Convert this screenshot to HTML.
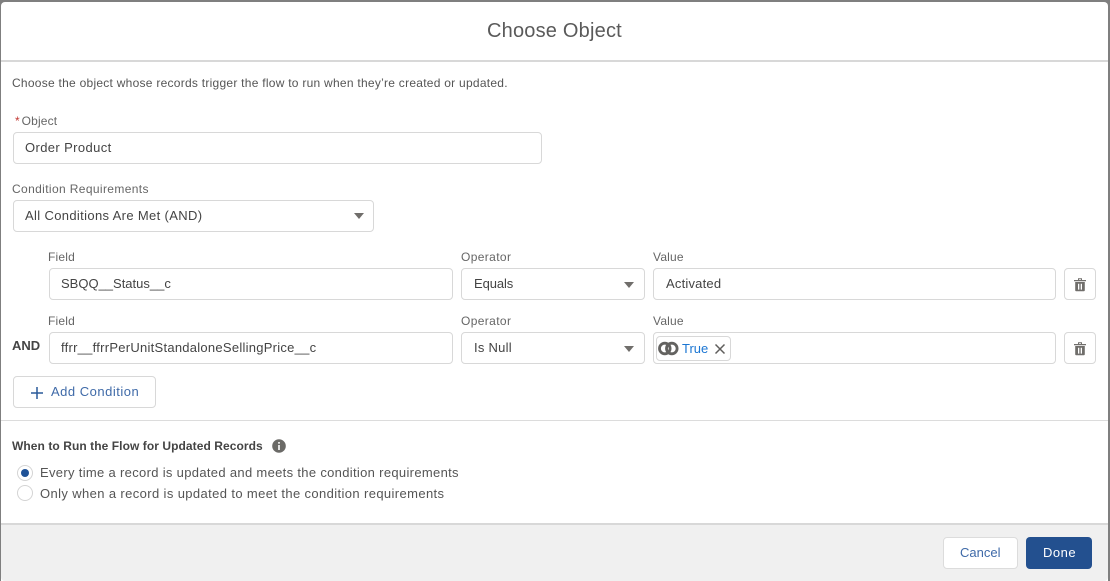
<!DOCTYPE html>
<html><head><meta charset="utf-8"><style>
html,body{margin:0;padding:0;width:1110px;height:581px;overflow:hidden;background:#7f7f7f}
*{box-sizing:border-box}
body{font-family:"Liberation Sans",sans-serif;font-size:13px;color:#444}
#m{position:absolute;left:1px;top:2px;width:1107px;height:579px;background:#fff;border-radius:4px 4px 0 0;overflow:hidden}
.a{position:absolute}
.t{position:absolute;white-space:nowrap;line-height:16px}
.l{color:#666;font-size:12px}
.b{position:absolute;background:#fff;border:1px solid #d8d8d8;border-radius:4px}
.tri{position:absolute;width:0;height:0;border-left:5.5px solid transparent;border-right:5.5px solid transparent;border-top:6.5px solid #706e6b}
</style></head><body>
<div id="m"></div>
<div class="a" style="left:1px;top:60px;width:1107px;height:2px;background:#d8d8d8"></div>
<div class="t" style="left:487px;top:19px;font-size:20px;line-height:24px;color:#5a5a5a;letter-spacing:.2px">Choose Object</div>
<div class="t" style="left:12px;top:75px;font-size:12px;letter-spacing:.26px;color:#555">Choose the object whose records trigger the flow to run when they’re created or updated.</div>

<div class="t l" style="left:15px;top:113px"><span style="color:#c23934">*</span><span style="margin-left:2px;letter-spacing:.15px">Object</span></div>
<div class="b" style="left:13px;top:132px;width:529px;height:32px"></div>
<div class="t" style="left:25px;top:140px;letter-spacing:.38px">Order Product</div>

<div class="t l" style="left:12px;top:181px;letter-spacing:.37px">Condition Requirements</div>
<div class="b" style="left:13px;top:200px;width:361px;height:32px"></div>
<div class="t" style="left:25px;top:208px;letter-spacing:.35px">All Conditions Are Met (AND)</div>
<div class="tri" style="left:354px;top:213px"></div>

<div class="t l" style="left:48px;top:249px;letter-spacing:.2px">Field</div>
<div class="t l" style="left:461px;top:249px;letter-spacing:.37px">Operator</div>
<div class="t l" style="left:653px;top:249px;letter-spacing:.2px">Value</div>
<div class="b" style="left:49px;top:268px;width:404px;height:32px"></div>
<div class="t" style="left:61px;top:276px">SBQQ__Status__c</div>
<div class="b" style="left:461px;top:268px;width:184px;height:32px"></div>
<div class="t" style="left:474px;top:276px;letter-spacing:-.1px">Equals</div>
<div class="tri" style="left:624px;top:282px"></div>
<div class="b" style="left:653px;top:268px;width:403px;height:32px"></div>
<div class="t" style="left:666px;top:276px;letter-spacing:.2px">Activated</div>
<div class="b" style="left:1064px;top:268px;width:32px;height:32px"></div>
<svg class="a" style="left:1073px;top:277px" width="14" height="15" viewBox="0 0 14 15"><path d="M1 3h12v1.200H1zM5 3V1.300h4V3h-1V2.300H6V3z" fill="#706e6b"/><path d="M2.200 5h9.600v8.300a1 1 0 0 1-1 1H3.200a1 1 0 0 1-1-1z" fill="#706e6b"/><path d="M5 6.800h1.300v5.800H5zM7.700 6.800H9v5.800H7.700z" fill="#fff"/></svg>

<div class="t" style="left:12px;top:338px;font-weight:bold">AND</div>
<div class="t l" style="left:48px;top:313px;letter-spacing:.2px">Field</div>
<div class="t l" style="left:461px;top:313px;letter-spacing:.37px">Operator</div>
<div class="t l" style="left:653px;top:313px;letter-spacing:.2px">Value</div>
<div class="b" style="left:49px;top:332px;width:404px;height:32px"></div>
<div class="t" style="left:61px;top:340px;letter-spacing:.26px">ffrr__ffrrPerUnitStandaloneSellingPrice__c</div>
<div class="b" style="left:461px;top:332px;width:184px;height:32px"></div>
<div class="t" style="left:474px;top:340px;letter-spacing:.25px">Is Null</div>
<div class="tri" style="left:624px;top:346px"></div>
<div class="b" style="left:653px;top:332px;width:403px;height:32px"></div>
<div class="b" style="left:656px;top:336px;width:75px;height:25px"></div>
<svg class="a" style="left:658px;top:341px" width="21" height="15" viewBox="0 0 21 15"><circle cx="6.800" cy="7.500" r="5.300" fill="none" stroke="#636260" stroke-width="2.800"/><circle cx="13.800" cy="7.500" r="5.300" fill="none" stroke="#636260" stroke-width="2.800"/></svg>
<div class="t" style="left:682px;top:341px;color:#1b76d3">True</div>
<svg class="a" style="left:714px;top:343px" width="12" height="12" viewBox="0 0 12 12"><path d="M1.500 1.500l9 9M10.500 1.500l-9 9" stroke="#5f5e5c" stroke-width="1.500" fill="none"/></svg>
<div class="b" style="left:1064px;top:332px;width:32px;height:32px"></div>
<svg class="a" style="left:1073px;top:341px" width="14" height="15" viewBox="0 0 14 15"><path d="M1 3h12v1.200H1zM5 3V1.300h4V3h-1V2.300H6V3z" fill="#706e6b"/><path d="M2.200 5h9.600v8.300a1 1 0 0 1-1 1H3.200a1 1 0 0 1-1-1z" fill="#706e6b"/><path d="M5 6.800h1.300v5.800H5zM7.700 6.800H9v5.800H7.700z" fill="#fff"/></svg>

<div class="b" style="left:13px;top:376px;width:143px;height:32px"></div>
<svg class="a" style="left:30px;top:386px" width="14" height="14" viewBox="0 0 14 14"><path d="M7 1v12M1 7h12" stroke="#2a5a9a" stroke-width="1.500" fill="none"/></svg>
<div class="t" style="left:51px;top:384px;color:#3f6aa8;letter-spacing:.5px">Add Condition</div>

<div class="a" style="left:1px;top:420px;width:1107px;height:1px;background:#dcdcdc"></div>
<div class="t" style="left:12px;top:438px;font-weight:bold;font-size:12px;letter-spacing:.07px">When to Run the Flow for Updated Records</div>
<svg class="a" style="left:272px;top:439px" width="14" height="14" viewBox="0 0 14 14"><circle cx="7" cy="7" r="6.800" fill="#6b6a67"/><rect x="6.200" y="3" width="1.600" height="1.700" fill="#fff"/><rect x="6.200" y="6" width="1.600" height="5" fill="#fff"/></svg>

<div class="a" style="left:17px;top:465px;width:16px;height:16px;border:1px solid #d4d4d4;border-radius:50%;background:#fff"></div>
<div class="a" style="left:21px;top:469px;width:8px;height:8px;border-radius:50%;background:#1f5297"></div>
<div class="t" style="left:40px;top:465px;letter-spacing:.32px;color:#555">Every time a record is updated and meets the condition requirements</div>
<div class="a" style="left:17px;top:485px;width:16px;height:16px;border:1px solid #d4d4d4;border-radius:50%;background:#fff"></div>
<div class="t" style="left:40px;top:486px;letter-spacing:.38px;color:#555">Only when a record is updated to meet the condition requirements</div>

<div class="a" style="left:1px;top:523px;width:1107px;height:58px;background:#f0f0f0;border-top:2px solid #d8d8d8;border-radius:0 0 4px 4px"></div>
<div class="b" style="left:943px;top:537px;width:75px;height:32px;border-color:#dcdcdc"></div>
<div class="t" style="left:960px;top:545px;color:#3f6aa8">Cancel</div>
<div class="a" style="left:1026px;top:537px;width:66px;height:32px;background:#23508f;border-radius:4px"></div>
<div class="t" style="left:1043px;top:545px;color:#fff;letter-spacing:.5px">Done</div>
</body></html>
